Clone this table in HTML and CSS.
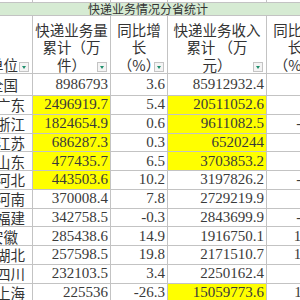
FILE: index.html
```html
<!DOCTYPE html>
<html lang="zh">
<head>
<meta charset="utf-8">
<link rel="stylesheet" href="styles.css">
</head>
<body>
<div class="sheet">
  <div class="cell"></div><div class="cell"></div><div class="cell"></div><div class="cell"></div><div class="cell"></div>
  <div class="title">快递业务情况分省统计</div>

  <div class="cell head name inset">单位<span class="filter"></span></div>
  <div class="cell head">快递业务量<br>累计（万<br>件）<span class="filter"></span></div>
  <div class="cell head">同比增<br>长<br>（%）<span class="filter"></span></div>
  <div class="cell head">快递业务收入<br>累计 （万<br>元）<span class="filter"></span></div>
  <div class="cell head">同比增<br>长<br>（%）<span class="filter"></span></div>

  <div class="cell name inset">全国</div><div class="cell num">8986793</div><div class="cell num">3.6</div><div class="cell num">85912932.4</div><div class="cell num last">7.9</div>
  <div class="cell name">广东</div><div class="cell num hl">2496919.7</div><div class="cell num">5.4</div><div class="cell num hl">20511052.6</div><div class="cell num last">4.2</div>
  <div class="cell name">浙江</div><div class="cell num hl">1824654.9</div><div class="cell num">0.6</div><div class="cell num hl">9611082.5</div><div class="cell num last">-1.2</div>
  <div class="cell name">江苏</div><div class="cell num hl">686287.3</div><div class="cell num">0.3</div><div class="cell num hl">6520244</div><div class="cell num last">2.7</div>
  <div class="cell name">山东</div><div class="cell num hl">477435.7</div><div class="cell num">6.5</div><div class="cell num hl">3703853.2</div><div class="cell num last">5.1</div>
  <div class="cell name">河北</div><div class="cell num hl">443503.6</div><div class="cell num">10.2</div><div class="cell num">3197826.2</div><div class="cell num last">-2.4</div>
  <div class="cell name">河南</div><div class="cell num">370008.4</div><div class="cell num">7.8</div><div class="cell num">2729219.9</div><div class="cell num last">6.3</div>
  <div class="cell name">福建</div><div class="cell num">342758.5</div><div class="cell num">-0.3</div><div class="cell num">2843699.9</div><div class="cell num last">-3.5</div>
  <div class="cell name inset">安徽</div><div class="cell num">285438.6</div><div class="cell num">14.9</div><div class="cell num">1916750.1</div><div class="cell num last">12.6</div>
  <div class="cell name">湖北</div><div class="cell num">257598.5</div><div class="cell num">19.8</div><div class="cell num">2171510.7</div><div class="cell num last">16.4</div>
  <div class="cell name">四川</div><div class="cell num">232103.5</div><div class="cell num">3.4</div><div class="cell num">2250162.4</div><div class="cell num last">4.8</div>
  <div class="cell name">上海</div><div class="cell num">225536</div><div class="cell num">-26.3</div><div class="cell num hl">15059773.6</div><div class="cell num last">11.7</div>
</div>
</body>
</html>
```

FILE: styles.css
```css
html, body {
  margin: 0;
  padding: 0;
  background: #ffffff;
  overflow: hidden;
}

.sheet {
  display: grid;
  grid-template-columns: 33px 78px 57px 99px 57px;
  grid-template-rows: 3px 13px 58px 22px repeat(11, 18.75px);
  font-family: "Noto Sans CJK SC", "Noto Sans", sans-serif;
  color: #333333;
}

.cell {
  box-sizing: border-box;
  border-right: 1px solid #c3c3c3;
  border-bottom: 1px solid #c3c3c3;
  position: relative;
  min-width: 0;
  white-space: nowrap;
}

.title {
  grid-column: 1 / -1;
  box-sizing: border-box;
  background: #d6ebd3;
  border-bottom: 1px solid #c3c3c3;
  font-size: 12px;
  line-height: 12px;
  text-align: center;
  padding-right: 28px;
  overflow: hidden;
  color: #333333;
}

.head {
  font-size: 14.5px;
  line-height: 17.5px;
  text-align: center;
  display: flex;
  flex-direction: column;
  justify-content: flex-end;
  align-items: center;
  padding-bottom: 0;
}

.head.name {
  flex-direction: row;
  align-items: flex-end;
  justify-content: flex-end;
}

.name {
  display: flex;
  align-items: center;
  justify-content: flex-end;
  padding-right: 7px;
  font-size: 14.5px;
}

.name.inset {
  padding-right: 14px;
}

.num {
  display: flex;
  align-items: center;
  justify-content: flex-end;
  padding-right: 2px;
  font-family: "Liberation Serif", serif;
  font-size: 15px;
  color: #3a3a3a;
}

.num.last {
  padding-right: 3px;
}

.hl {
  background: #ffff00;
}

.filter {
  position: absolute;
  right: 3px;
  bottom: 1px;
  width: 10px;
  height: 10px;
  box-sizing: border-box;
  border: 1px solid #c4c4c4;
  background: #f4f4f4;
}

.filter::after {
  content: "";
  position: absolute;
  left: 2px;
  top: 3px;
  border-left: 2.5px solid transparent;
  border-right: 2.5px solid transparent;
  border-top: 3px solid #1f8f6c;
}
```
